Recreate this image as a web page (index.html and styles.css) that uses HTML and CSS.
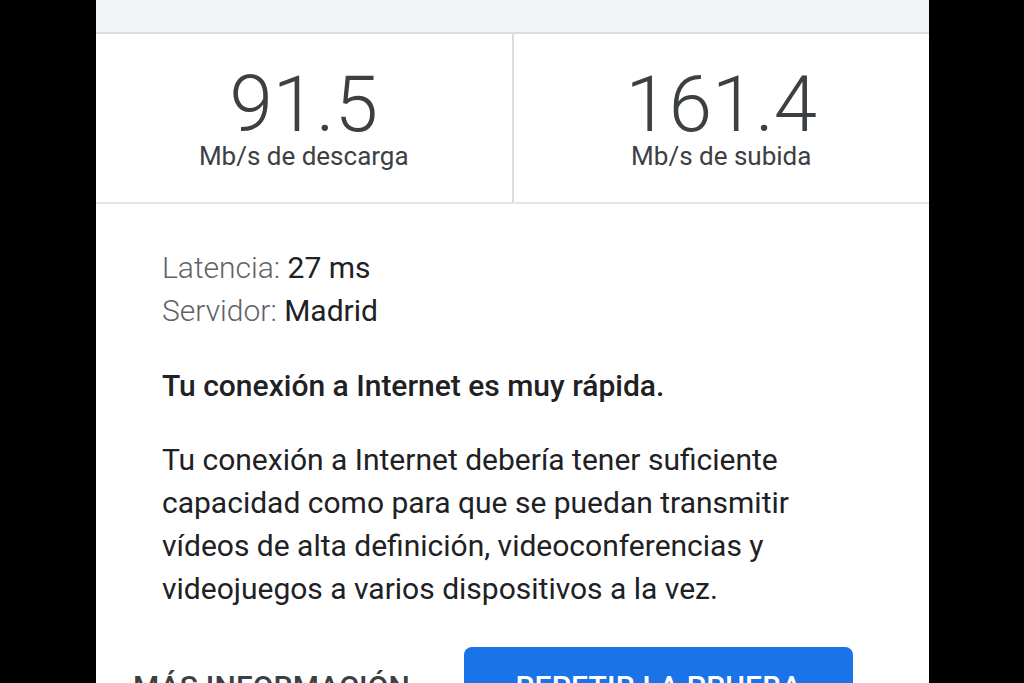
FILE: index.html
```html
<!DOCTYPE html>
<html lang="es">
<head>
<meta charset="utf-8">
<title>Prueba de velocidad</title>
<link rel="stylesheet" href="styles.css">
</head>
<body>
<div class="card">
  <div class="topbar"></div>
  <div class="stats">
    <div class="stat">
      <div class="num">91.5</div>
      <div class="unit">Mb/s de descarga</div>
    </div>
    <div class="stat">
      <div class="num">161.4</div>
      <div class="unit">Mb/s de subida</div>
    </div>
  </div>
  <div class="content">
    <div class="meta">
      <div><span class="key">Latencia:</span> 27 ms</div>
      <div><span class="key">Servidor:</span> Madrid</div>
    </div>
    <p class="verdict">Tu conexión a Internet es muy rápida.</p>
    <p class="desc">Tu conexión a Internet debería tener suficiente capacidad como para que se puedan transmitir vídeos de alta definición, videoconferencias y videojuegos a varios dispositivos a la vez.</p>
    <div class="actions">
      <span class="link">MÁS INFORMACIÓN</span>
      <span class="btn">REPETIR LA PRUEBA</span>
    </div>
  </div>
</div>
</body>
</html>
```

FILE: styles.css
```css
html, body {
  margin: 0;
  padding: 0;
  background: #000;
  height: 683px;
  overflow: hidden;
}
body {
  font-family: Roboto, "Liberation Sans", sans-serif;
  color: #202124;
}
.card {
  margin-left: 96px;
  width: 833px;
  background: #fff;
  height: 683px;
  overflow: hidden;
}
.topbar {
  height: 32px;
  background: #f1f3f4;
  border-bottom: 2px solid #dadce0;
}
.stats {
  display: flex;
  border-bottom: 2px solid #e3e5e8;
  height: 168px;
}
.stat {
  flex: 1;
  display: flex;
  flex-direction: column;
  align-items: center;
  padding-top: 34px;
  box-sizing: border-box;
}
.stat + .stat {
  border-left: 2px solid #dadce0;
}
.num {
  font-size: 78px;
  font-weight: 300;
  line-height: 74px;
  color: #3c4043;
}
.unit {
  font-size: 26px;
  line-height: 28px;
  color: #3c4043;
}
.content {
  padding: 42px 0 0 66px;
  font-size: 30px;
}
.meta {
  line-height: 43px;
}
.key {
  font-weight: 300;
  color: #5f6368;
}
.verdict {
  margin: 32px 0 0;
  font-weight: 500;
  line-height: 43px;
}
.desc {
  margin: 31px 0 0;
  line-height: 43px;
  width: 645px;
}
.actions {
  display: flex;
  align-items: center;
  margin-top: 37px;
}
.link {
  font-size: 30px;
  font-weight: 500;
  color: #3c4043;
  letter-spacing: 0.2px;
  margin-left: -29px;
  width: 331px;
  flex: none;
}
.btn {
  flex: none;
  width: 389px;
  height: 78px;
  background: #1a73e8;
  color: #fff;
  border-radius: 8px;
  display: flex;
  align-items: center;
  justify-content: center;
  font-size: 30px;
  font-weight: 500;
  letter-spacing: 0.2px;
}
```
